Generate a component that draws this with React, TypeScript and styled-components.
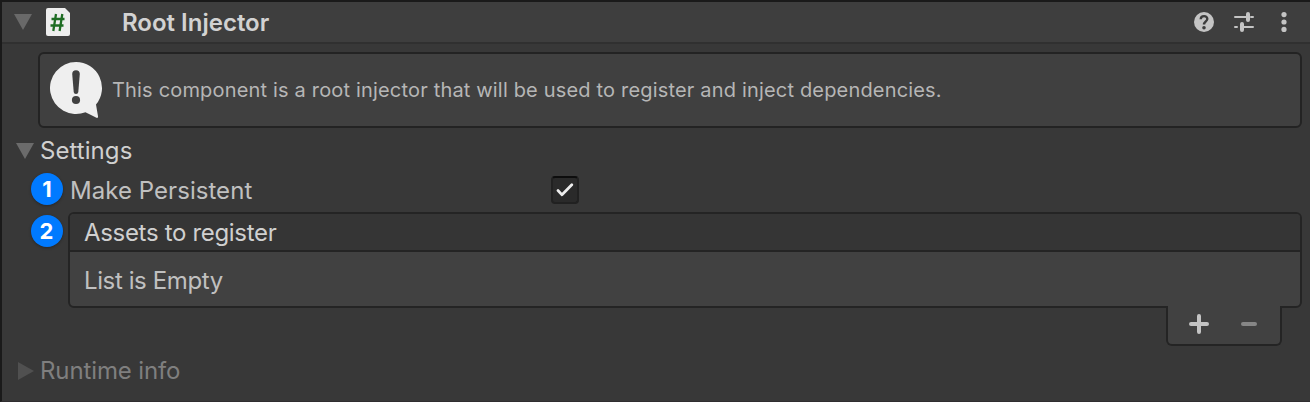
import React from 'react';
import styled, { createGlobalStyle } from 'styled-components';

const GlobalStyle = createGlobalStyle`
  * { box-sizing: border-box; }
  body { margin: 0; background: #383838; font-family: Inter, "Liberation Sans", sans-serif; }
  svg { display: block; flex: none; }
`;

const Panel = styled.main`
  width: 1310px;
  height: 402px;
  overflow: hidden;
  background: #383838;
  border-top: 2px solid #1a1a1a;
  border-left: 2px solid #1a1a1a;
  border-bottom: 1px solid #302e30;
  display: flex;
  flex-direction: column;
`;

const Header = styled.header`
  height: 42px;
  flex: none;
  display: flex;
  align-items: center;
  padding: 0 16px 0 12px;
  background: #3e3e3e;
  border-bottom: 2px solid #303030;
`;

const Text = styled.span<{ $color?: string; $size?: number; $weight?: number; $spacing?: number }>`
  color: ${(p) => p.$color ?? '#c0c0c0'};
  font-size: ${(p) => p.$size ?? 24}px;
  font-weight: ${(p) => p.$weight ?? 400};
  letter-spacing: ${(p) => p.$spacing ?? 0}px;
  line-height: 30px;
  white-space: nowrap;
`;

const Title = styled(Text)`
  padding-top: 2px;
`;

const ScriptIcon = styled.svg`
  margin: 0 52px 0 14px;
`;

const Actions = styled.div`
  margin-left: auto;
  display: flex;
  align-items: center;
  gap: 20px;
`;

const Content = styled.section`
  padding: 8px 8px 0 14px;
  display: flex;
  flex-direction: column;
`;

const InfoBox = styled.div`
  height: 76px;
  margin-left: 22px;
  padding: 0 0 0 10px;
  display: flex;
  align-items: center;
  gap: 10px;
  background: #404040;
  border: 2px solid #232323;
  border-radius: 6px;
`;

const Foldout = styled.div<{ $top: number }>`
  display: flex;
  align-items: center;
  gap: 6px;
  height: 30px;
  margin-top: ${(p) => p.$top}px;
`;

const Property = styled.div`
  display: flex;
  align-items: center;
  height: 32px;
  margin: 7px 0 7px 15px;
`;

const Badge = styled.span`
  flex: none;
  width: 32px;
  height: 32px;
  border-radius: 50%;
  background: #007aff;
  box-shadow: 0 1px 3px rgba(0, 0, 0, 0.3);
  color: #fff;
  font-size: 22px;
  font-weight: 700;
  line-height: 32px;
  text-align: center;
`;

const PropertyLabel = styled.div`
  width: 481px;
  margin-left: 7px;
  padding-top: 3px;
`;

const Checkbox = styled.span`
  width: 28px;
  height: 28px;
  margin-top: 2px;
  display: grid;
  place-items: center;
  background: #2a2a2a;
  border: 2px solid #212121;
  border-top-color: #0d0d0d;
  border-radius: 4px;
`;

const ListRow = styled.div`
  display: flex;
  align-items: flex-start;
  gap: 5.5px;
  margin-left: 14.5px;

  > ${Badge} { margin-top: 3.4px; }
`;

const ListColumn = styled.div`
  flex: 1;
  display: flex;
  flex-direction: column;
`;

const ListBox = styled.div`
  height: 96px;
  border: 2px solid #242424;
  border-radius: 6px;
  background: #414141;
  overflow: hidden;
`;

const ListHeader = styled.div`
  height: 38px;
  padding: 4px 14px;
  background: #353535;
  border-bottom: 2px solid #242424;
`;

const ListBody = styled.div`
  padding: 14px;
`;

const ListFooter = styled.div`
  align-self: flex-end;
  width: 116px;
  height: 40px;
  margin: -2px 20px 0 0;
  padding: 0 23px 2px 19px;
  display: flex;
  align-items: center;
  justify-content: space-between;
  background: #414141;
  border: 2px solid #242424;
  border-top: 0;
  border-radius: 0 0 6px 6px;
`;

function Triangle({ open, color }: { open?: boolean; color: string }) {
  return (
    <svg width="18" height="18" viewBox="0 0 18 18" fill={color}>
      <path d={open ? 'M0 1h18L9 17z' : 'M2 0v18L18 9z'} />
    </svg>
  );
}

export default function App() {
  return (
    <>
      <GlobalStyle />
      <Panel>
        <Header>
          <Triangle open color="#696969" />
          <ScriptIcon width="24" height="28" viewBox="0 0 24 28">
            <path d="M2 0h17l5 5v21a2 2 0 0 1-2 2H2a2 2 0 0 1-2-2V2a2 2 0 0 1 2-2z" fill="#eee" />
            <path d="M10 6L7.3 23M16.3 6L13.6 23M5.5 11h13M4.5 17.5h13" stroke="#1f6d24" strokeWidth="2.3" fill="none" />
          </ScriptIcon>
          <Title $weight={600} $color="#d2d2d2">Root Injector</Title>
          <Actions>
            <svg width="20" height="20" viewBox="0 0 20 20">
              <circle cx="10" cy="10" r="10" fill="#c4c4c4" />
              <path d="M6.7 7.3C6.8 3 13.5 3.2 13.3 7c-.1 2.2-3.3 2.6-3.3 5.5" fill="none" stroke="#3c3c3c" strokeWidth="2.4" />
              <circle cx="10" cy="15.8" r="1.8" fill="#3c3c3c" />
            </svg>
            <svg width="20" height="20" viewBox="0 0 20 20" stroke="#c4c4c4" strokeWidth="2" strokeLinecap="round">
              <path d="M1 5h11M17 5h2M1 15h2M9 15h10" />
              <path d="M14 2v6M8 12v6" strokeWidth="4" />
            </svg>
            <svg width="20" height="20" viewBox="0 0 20 20" fill="#c4c4c4">
              <circle cx="10" cy="2.6" r="2.6" /><circle cx="10" cy="10" r="2.6" /><circle cx="10" cy="17.4" r="2.6" />
            </svg>
          </Actions>
        </Header>
        <Content>
          <InfoBox>
            <svg width="52" height="56" viewBox="0 0 52 56">
              <path d="M26 0a26 26 0 1 0 9.5 50.2l11 5.6q1.8.6 1.5-1.6L46 42.6A26 26 0 0 0 26 0z" fill="#efefef" />
              <path d="M22.2 12a3.8 3.8 0 0 1 7.6 0L28.3 30q-.2 2-2.3 2t-2.3-2z" fill="#404040" />
              <circle cx="26" cy="38" r="4.1" fill="#404040" />
            </svg>
            <Text $size={20} $color="#b6b6b6" $spacing={0.175}>This component is a root injector that will be used to register and inject dependencies.</Text>
          </InfoBox>
          <Foldout $top={8}>
            <Triangle open color="#6b6b6b" />
            <Text $color="#d0d0d0" $spacing={0.06}>Settings</Text>
          </Foldout>
          <Property>
            <Badge>1</Badge>
            <PropertyLabel><Text $spacing={0.05}>Make Persistent</Text></PropertyLabel>
            <Checkbox>
              <svg width="18" height="14" viewBox="0 0 18 14" fill="none" stroke="#ededed" strokeWidth="2.7" strokeLinecap="round" strokeLinejoin="round">
                <path d="M2 7.5l4 4.3L15.8 1.7" />
              </svg>
            </Checkbox>
          </Property>
          <ListRow>
            <Badge>2</Badge>
            <ListColumn>
              <ListBox>
                <ListHeader><Text $color="#d0d0d0" $spacing={-0.32}>Assets to register</Text></ListHeader>
                <ListBody><Text $spacing={-0.39}>List is Empty</Text></ListBody>
              </ListBox>
              <ListFooter>
                <svg width="24" height="20" viewBox="0 0 24 20" stroke="#c4c4c4" strokeWidth="4" strokeLinecap="round">
                  <path d="M4 10h16M12 2v16" />
                </svg>
                <svg width="16" height="4" viewBox="0 0 16 4"><rect width="16" height="4" rx="2" fill="#868686" /></svg>
              </ListFooter>
            </ListColumn>
          </ListRow>
          <Foldout $top={10}>
            <Triangle color="#505050" />
            <Text $color="#7f7f7f" $spacing={-0.12}>Runtime info</Text>
          </Foldout>
        </Content>
      </Panel>
    </>
  );
}
